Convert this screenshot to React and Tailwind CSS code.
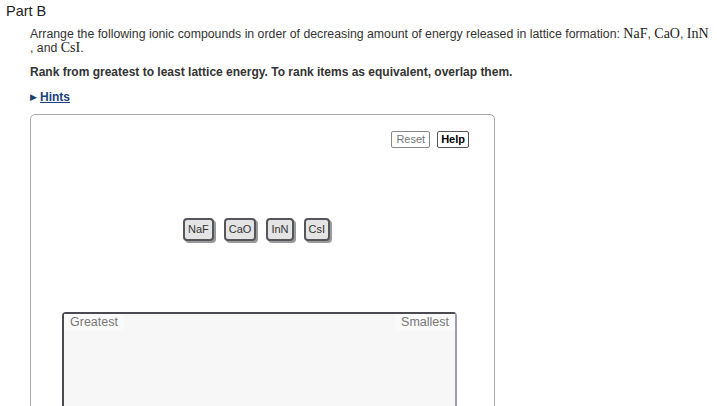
import React from 'react';

const Tile = ({ label }) => (
  <div className="h-[23px] px-[3px] flex items-center rounded-[4px] border-2 border-[#55555b] bg-[#e4e4e4] text-[11px] text-[#333] shadow-[2px_2px_0_#9a9a9a]">
    {label}
  </div>
);

const Formula = ({ children }) => (
  <span className="font-['Liberation_Serif',serif] text-[14px] text-[#222]">{children}</span>
);

export default function App() {
  return (
    <div className="w-[717px] h-[406px] overflow-hidden bg-white font-['Liberation_Sans',Arial,sans-serif] text-[#333]">
      <div className="pl-[6px] pt-[2px] text-[14.5px] leading-[18px] text-[#222]">Part B</div>
      <div className="pl-[30px]">
        <p className="mt-[7px] text-[12.3px] leading-[14px]">
          Arrange the following ionic compounds in order of decreasing amount of energy released in lattice formation: <Formula>NaF</Formula>, <Formula>CaO</Formula>, <Formula>InN</Formula>
          <br />, and <Formula>CsI</Formula>.
        </p>
        <p className="mt-[10px] text-[12px] leading-[14px] font-bold">
          Rank from greatest to least lattice energy. To rank items as equivalent, overlap them.
        </p>
        <div className="mt-[11px] flex items-center gap-[3px] text-[12px] leading-[14px]">
          <span className="text-[9px] text-[#1a3f73]">▶</span>
          <a className="font-bold text-[#1a3f80] underline">Hints</a>
        </div>
        <div className="mt-[10px] w-[465px] h-[320px] rounded-[5px] border border-[#aaaaaa] pt-[16px]">
          <div className="flex justify-end gap-[7px] pr-[25px]">
            <div className="h-[17px] px-[4px] flex items-center rounded-[2px] border border-[#888] text-[11px] text-[#777]">Reset</div>
            <div className="h-[17px] px-[3px] flex items-center rounded-[2px] border border-[#555] text-[11px] font-bold text-black">Help</div>
          </div>
          <div className="mt-[70px] flex gap-[10px] pl-[152px]">
            <Tile label="NaF" />
            <Tile label="CaO" />
            <Tile label="InN" />
            <Tile label="CsI" />
          </div>
          <div className="mt-[71px] ml-[31px] w-[395px] h-[120px] rounded-t-[4px] border-t-2 border-l-2 border-r-2 border-t-[#4a4a50] border-l-[#4a4a50] border-r-[#9e9cb0] bg-[#f7f7f7] flex justify-between">
            <span className="bg-[#fafafa] px-[6px] pt-[1px] h-[17px] text-[12.5px] leading-[14px] text-[#777]">Greatest</span>
            <span className="bg-[#fafafa] px-[6px] pt-[1px] h-[17px] text-[12.5px] leading-[14px] text-[#777]">Smallest</span>
          </div>
        </div>
      </div>
    </div>
  );
}
